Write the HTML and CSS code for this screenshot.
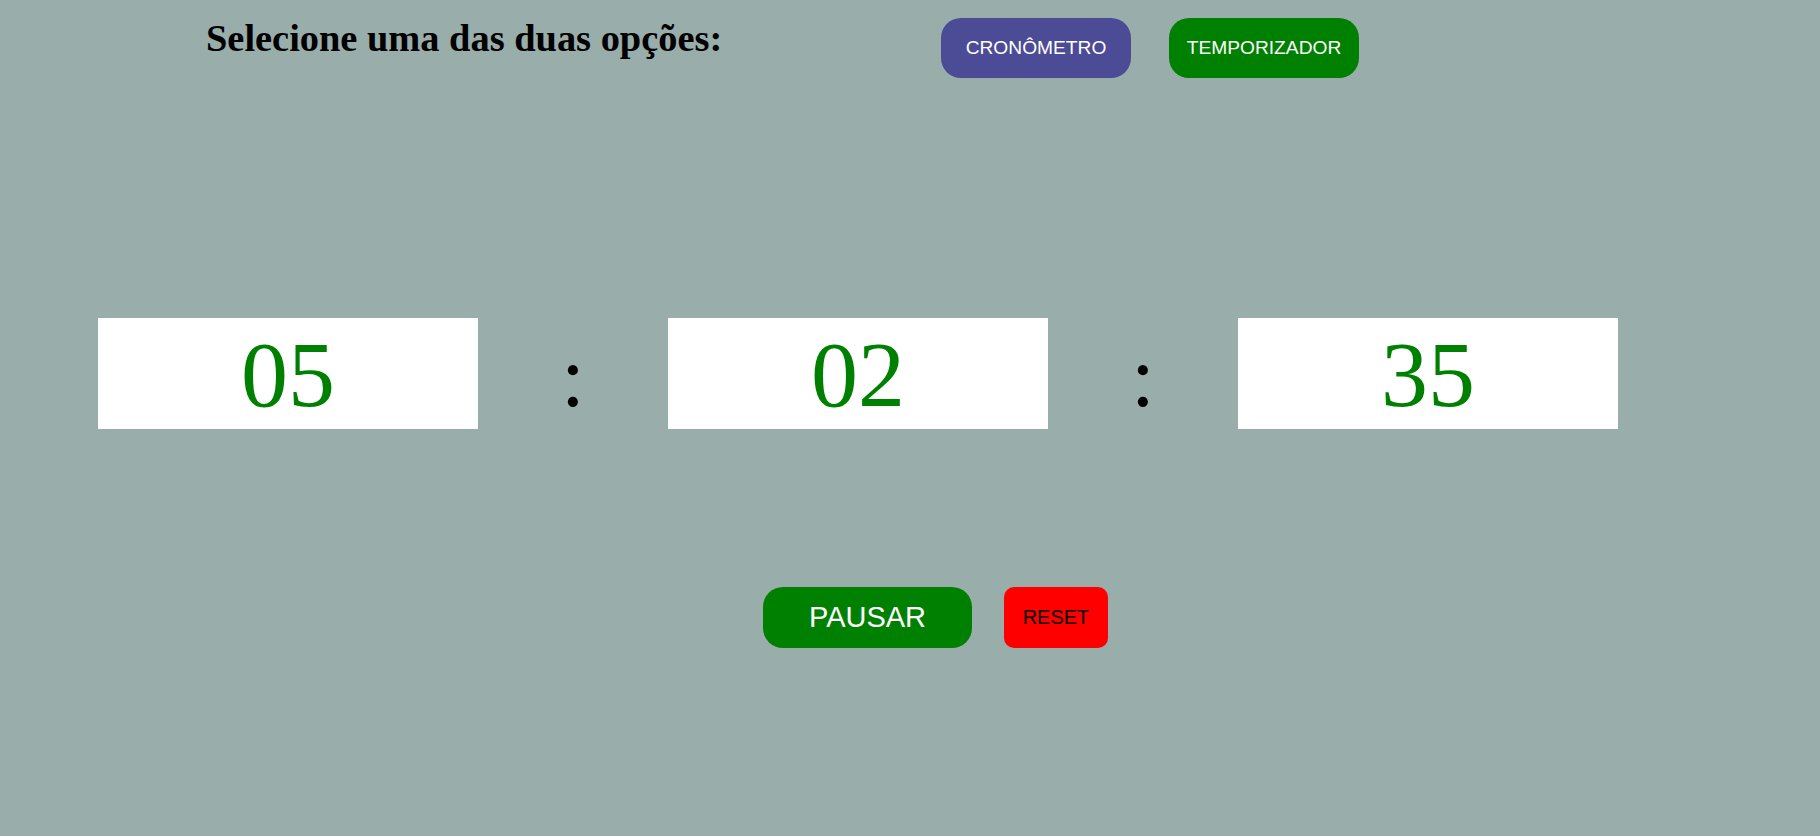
FILE: index.html
```html
<!DOCTYPE html>
<html lang="pt-BR">
<head>
<meta charset="utf-8">
<title>Cronômetro</title>
<link rel="stylesheet" href="styles.css">
</head>
<body>
<header class="header">
  <h1 class="title">Selecione uma das duas opções:</h1>
  <div class="modes">
    <button class="mode mode-crono">CRONÔMETRO</button>
    <button class="mode mode-timer">TEMPORIZADOR</button>
  </div>
</header>
<main>
  <div class="clock">
    <div class="cell">05</div>
    <div class="sep">:</div>
    <div class="cell">02</div>
    <div class="sep">:</div>
    <div class="cell">35</div>
  </div>
  <div class="controls">
    <button class="btn btn-pause">PAUSAR</button>
    <button class="btn btn-reset">RESET</button>
  </div>
</main>
</body>
</html>
```
FILE: styles.css
```css
html, body {
  margin: 0;
  padding: 0;
}
body {
  background: #99adab;
  width: 1820px;
  height: 836px;
  overflow: hidden;
  font-family: "Liberation Sans", Arial, sans-serif;
}
.header {
  display: flex;
  align-items: flex-start;
  padding: 18px 0 0 206px;
}
.title {
  width: 735px;
  margin: -2px 0 0 0;
  font-family: "Liberation Serif", "Times New Roman", serif;
  font-weight: bold;
  font-size: 38.4px;
  line-height: normal;
  color: #000;
}
.modes {
  display: flex;
  gap: 38px;
}
.mode {
  width: 190px;
  height: 60px;
  border: none;
  border-radius: 20px;
  color: #fff;
  font-family: "Liberation Sans", Arial, sans-serif;
  font-size: 19.2px;
  padding: 0;
}
.mode-crono { background: #4b4b96; }
.mode-timer { background: #008000; }
.clock {
  display: flex;
  margin: 240px 0 0 98px;
}
.cell {
  width: 380px;
  height: 111px;
  background: #fff;
  color: #008000;
  font-family: "Liberation Serif", "Times New Roman", serif;
  font-size: 94px;
  line-height: 112px;
  text-align: center;
}
.sep {
  width: 190px;
  height: 111px;
  color: #000;
  font-family: "Liberation Serif", "Times New Roman", serif;
  font-size: 86px;
  line-height: 118px;
  text-align: center;
}
.controls {
  display: flex;
  justify-content: center;
  gap: 32px;
  margin-top: 158px;
  padding-left: 51px;
}
.btn {
  height: 61px;
  border: none;
  padding: 0;
  font-family: "Liberation Sans", Arial, sans-serif;
}
.btn-pause {
  width: 209px;
  background: #008000;
  color: #fff;
  font-size: 29px;
  border-radius: 20px;
}
.btn-reset {
  width: 104px;
  background: #ff0000;
  color: #000;
  font-size: 20px;
  border-radius: 10px;
}
```
